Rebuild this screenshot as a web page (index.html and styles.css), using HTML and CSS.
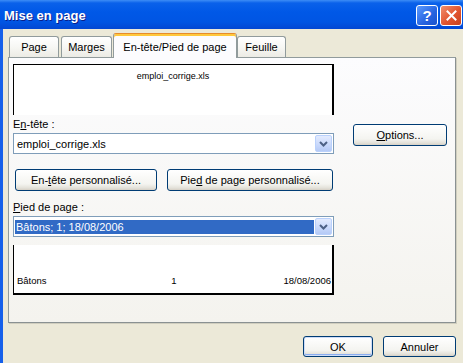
FILE: index.html
```html
<!DOCTYPE html>
<html>
<head>
    <link rel="stylesheet" href="styles.css">
</head>
<body>
    <div class="dialog">
        <div class="titlebar">
            <span class="title">Mise en page</span>
            <div class="caption-buttons">
                <span class="cap-btn help">?</span>
                <span class="cap-btn close">
                    <svg width="11" height="11" viewBox="0 0 11 11"><path d="M1.5 1.5L9.5 9.5M9.5 1.5L1.5 9.5" stroke="#fff" stroke-width="2" stroke-linecap="square"/></svg>
                </span>
            </div>
        </div>

        <div class="client">
            <div class="tabs">
                <div class="tab tab-page">Page</div>
                <div class="tab tab-marges">Marges</div>
                <div class="tab tab-entete active">En-tête/Pied de page</div>
                <div class="tab tab-feuille">Feuille</div>
            </div>

            <div class="panel">
                <div class="left">
                    <div class="preview preview-head">emploi_corrige.xls</div>

                    <div class="label">E<u>n</u>-tête :</div>
                    <div class="combo">
                        <span class="combo-value">emploi_corrige.xls</span>
                        <span class="drop">
                            <svg width="9" height="6" viewBox="0 0 9 6"><path d="M1 1L4.5 4.5L8 1" fill="none" stroke="#4D6185" stroke-width="2"/></svg>
                        </span>
                    </div>

                    <div class="btn-row">
                        <button class="btn btn-head">En-<u>t</u>ête personnalisé...</button>
                        <button class="btn btn-foot">Pie<u>d</u> de page personnalisé...</button>
                    </div>

                    <div class="label label-foot"><u>P</u>ied de page :</div>
                    <div class="combo">
                        <span class="combo-value selected"><span class="hl">Bâtons; 1; 18/08/2006</span></span>
                        <span class="drop">
                            <svg width="9" height="6" viewBox="0 0 9 6"><path d="M1 1L4.5 4.5L8 1" fill="none" stroke="#4D6185" stroke-width="2"/></svg>
                        </span>
                    </div>

                    <div class="preview preview-foot">
                        <span class="pf-left">Bâtons</span>
                        <span class="pf-center">1</span>
                        <span class="pf-right">18/08/2006</span>
                    </div>
                </div>

                <div class="right">
                    <button class="btn btn-options"><u>O</u>ptions...</button>
                </div>
            </div>

            <div class="actions">
                <button class="btn btn-ok">OK</button>
                <button class="btn btn-cancel">Annuler</button>
            </div>
        </div>
    </div>
</body>
</html>
```

FILE: styles.css
```css
* {
    box-sizing: border-box;
}

body {
    margin: 0;
    font: 11px "Liberation Sans", Arial, sans-serif;
    color: #000;
}

.dialog {
    width: 463px;
    height: 363px;
    display: flex;
    flex-direction: column;
    background: #ECE9D8;
    overflow: hidden;
}

/* title bar */
.titlebar {
    flex: none;
    height: 29px;
    display: flex;
    align-items: center;
    justify-content: space-between;
    padding: 0 1px 0 4px;
    background: linear-gradient(#3D8DF6 0, #0A61EA 3px, #0058E7 12px, #0055E3 22px, #0347D2 29px);
}

.title {
    color: #fff;
    font: bold 13px "Liberation Sans", Arial, sans-serif;
    text-shadow: 1px 1px #0A1E8A;
    padding-top: 2px;
}

.caption-buttons {
    display: flex;
    gap: 2px;
    padding-top: 1px;
}

.cap-btn {
    width: 22px;
    height: 21px;
    border: 1px solid #fff;
    border-radius: 3px;
    display: flex;
    align-items: center;
    justify-content: center;
}

.help {
    background: linear-gradient(135deg, #5B9BFF, #2663E0 60%, #1A52CC);
    color: #fff;
    font: bold 15px "Liberation Sans", Arial, sans-serif;
}

.close {
    background: linear-gradient(135deg, #F08F6E, #E2542E 55%, #C8411E);
}

/* client area */
.client {
    flex: 1;
    display: flex;
    flex-direction: column;
    border-left: 3px solid #1660EA;
}

.tabs {
    display: flex;
    align-items: flex-end;
    height: 24px;
    margin: 4px 0 0 6px;
}

.tab {
    height: 21px;
    display: flex;
    align-items: center;
    justify-content: center;
    border: 1px solid #919B9C;
    border-bottom: none;
    border-radius: 3px 3px 0 0;
    background: linear-gradient(#FFFFFF, #F7F7F4 50%, #ECEBE5);
}

.tab-page {
    width: 50px;
    margin-right: 2px;
}

.tab-marges {
    width: 51px;
    margin-right: 1px;
}

.tab-entete {
    width: 124px;
}

.tab-feuille {
    width: 49px;
}

.tab.active {
    height: 25px;
    margin-bottom: -1px;
    position: relative;
    z-index: 1;
    background: #FCFCFE;
    border-top: 1px solid #E68B2C;
    box-shadow: inset 0 2px #FFC83C;
    padding-top: 1px;
}

.panel {
    flex: none;
    width: 448px;
    height: 266px;
    margin-left: 5px;
    display: flex;
    gap: 19px;
    padding: 6px 0 0 4px;
    border: 1px solid #919B9C;
    border-right-color: #8A9192;
    border-bottom-color: #8A9192;
    box-shadow: 1px 1px #D0CEBF;
    background: linear-gradient(#FCFCFE, #F4F3EE);
}

.left {
    width: 321px;
    display: flex;
    flex-direction: column;
}

.preview {
    background: #fff;
    border: 0 solid #000;
    font-size: 9px;
    line-height: 11px;
}

.preview-head {
    height: 51px;
    border-width: 1px 2px 0 1px;
    text-align: center;
    padding-top: 6px;
}

.preview-foot {
    height: 50px;
    margin-top: 8px;
    border-width: 0 2px 2px 1px;
    display: grid;
    grid-template-columns: 1fr auto 1fr;
    align-items: end;
    padding: 0 1px 7px 3px;
    font-size: 9.5px;
}

.pf-right {
    text-align: right;
}

.label {
    line-height: 13px;
    margin-top: 3px;
}

.label-foot {
    margin-top: 10px;
}

.combo {
    height: 21px;
    margin-top: 2px;
    display: flex;
    align-items: center;
    border: 1px solid #7F9DB9;
    background: #fff;
}

.combo-value {
    flex: 1;
    padding-left: 3px;
}

.combo-value.selected {
    padding-left: 1px;
    display: flex;
}

.hl {
    flex: 1;
    height: 14px;
    line-height: 14px;
    padding-left: 1px;
    margin-top: 1px;
    background: #316AC5;
    color: #fff;
}

.drop {
    width: 17px;
    height: 17px;
    margin: 0 1px;
    display: flex;
    align-items: center;
    justify-content: center;
    border: 1px solid #BAD1FC;
    border-radius: 2px;
    background: linear-gradient(#E3EBFE, #C8D8FB 60%, #B5CAF6);
}

/* buttons */
.btn {
    font: 11px "Liberation Sans", Arial, sans-serif;
    color: #000;
    height: 22px;
    padding: 0;
    border: 1px solid #003C74;
    border-radius: 3px;
    background: linear-gradient(#FFFFFF, #F4F4F0 70%, #E3E1D9 90%, #D6D0C5);
}

.btn-row {
    display: flex;
    margin-top: 15px;
}

.btn-head {
    width: 142px;
    margin-left: 2px;
}

.btn-foot {
    width: 166px;
    margin-left: 10px;
}

.btn-options {
    width: 94px;
    margin-top: 60px;
}

.actions {
    display: flex;
    justify-content: flex-end;
    gap: 10px;
    margin-top: 13px;
    padding-right: 7px;
}

.btn-ok {
    width: 70px;
    height: 21px;
    box-shadow: inset 0 0 0 1px #CEDCF7, inset 0 -1px 0 1px #8AADF0;
}

.btn-cancel {
    width: 73px;
    height: 21px;
}
```
